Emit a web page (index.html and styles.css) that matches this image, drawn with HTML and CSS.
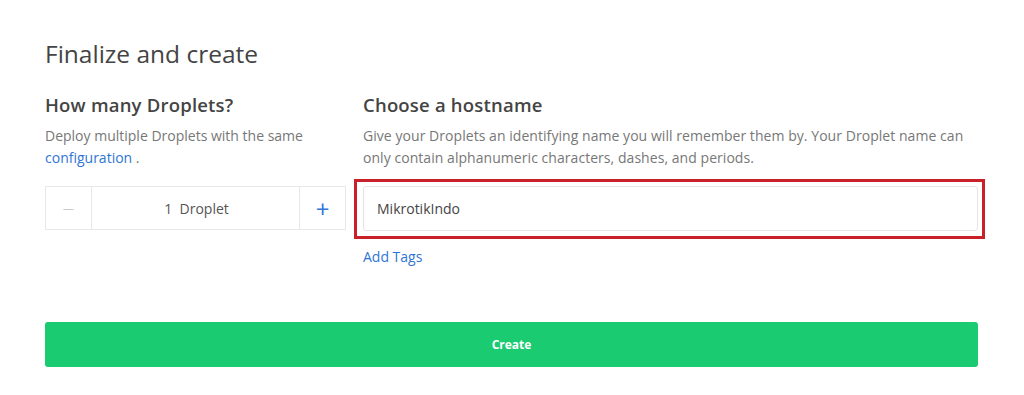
FILE: index.html
```html
<!DOCTYPE html>
<html lang="en">
<head>
    <meta charset="UTF-8">
    <meta name="viewport" content="width=device-width, initial-scale=1.0">
    <title>Finalize and create</title>
    <link rel="stylesheet" href="styles.css">
</head>
<body>
    <div class="container">
        <h2 class="page-title">Finalize and create</h2>

        <div class="columns">
            <div class="col-left">
                <h3 class="section-title">How many Droplets?</h3>
                <p class="section-desc">Deploy multiple Droplets with the same <a href="#">configuration</a> .</p>
                <div class="stepper">
                    <button class="step-btn minus">&minus;</button>
                    <div class="step-value">1&nbsp; Droplet</div>
                    <button class="step-btn plus">+</button>
                </div>
            </div>

            <div class="col-right">
                <h3 class="section-title">Choose a hostname</h3>
                <p class="section-desc">Give your Droplets an identifying name you will remember them by. Your Droplet name can only contain alphanumeric characters, dashes, and periods.</p>
                <div class="highlight">
                    <input class="hostname" type="text" value="MikrotikIndo">
                </div>
                <a href="#" class="add-tags">Add Tags</a>
            </div>
        </div>

        <button class="create-btn">Create</button>
    </div>
</body>
</html>
```

FILE: styles.css
```css
* {
    margin: 0;
    padding: 0;
    box-sizing: border-box;
    font-family: "Open Sans", Arial, sans-serif;
}

body {
    background-color: #ffffff;
    color: #444;
}

.container {
    width: 933px;
    margin-left: 45px;
    padding-top: 38px;
}

.page-title {
    font-size: 24.5px;
    font-weight: 400;
    color: #444;
    line-height: 32px;
    margin-bottom: 22px;
}

.columns {
    display: flex;
    gap: 17px;
}

.col-left {
    width: 301px;
    flex-shrink: 0;
}

.col-right {
    flex: 1;
    min-width: 0;
}

.section-title {
    font-size: 18.5px;
    font-weight: 600;
    letter-spacing: 0.2px;
    color: #444;
    line-height: 26px;
    margin-bottom: 7px;
}

.section-desc {
    font-size: 14px;
    color: #777;
    line-height: 22px;
}

.col-right .section-desc {
    letter-spacing: 0.05px;
}

.section-desc a {
    color: #2f75d6;
    text-decoration: none;
}

.stepper {
    display: flex;
    height: 44px;
    margin-top: 17px;
    border: 1px solid #e8e8e8;
}

.step-btn {
    width: 46px;
    background: #fff;
    border: none;
    font-size: 22px;
    cursor: pointer;
}

.step-btn.minus {
    color: #ccc;
    font-weight: 300;
    border-right: 1px solid #e8e8e8;
}

.step-btn.plus {
    color: #2f75d6;
    font-size: 24px;
    font-weight: 400;
    border-left: 1px solid #e8e8e8;
}

.step-value {
    flex: 1;
    display: flex;
    align-items: center;
    justify-content: center;
    padding-left: 2px;
    font-size: 14px;
    color: #555;
}

.highlight {
    margin: 10px 0 0 -9px;
    width: 631px;
    padding: 4px 4px 5px 6px;
    border: 3px solid #c9202a;
}

.hostname {
    display: block;
    width: 100%;
    height: 45px;
    padding: 0 13px;
    border: 1px solid #e6e6e6;
    border-radius: 3px;
    font-size: 14px;
    color: #444;
    outline: none;
}

.add-tags {
    display: inline-block;
    margin-top: 8px;
    font-size: 14px;
    line-height: 20px;
    color: #2f75d6;
    text-decoration: none;
}

.create-btn {
    display: block;
    width: 933px;
    height: 45px;
    margin-top: 55px;
    background-color: #1acb71;
    border: none;
    border-radius: 3px;
    color: #fff;
    font-size: 12px;
    font-weight: 700;
    cursor: pointer;
}
```
